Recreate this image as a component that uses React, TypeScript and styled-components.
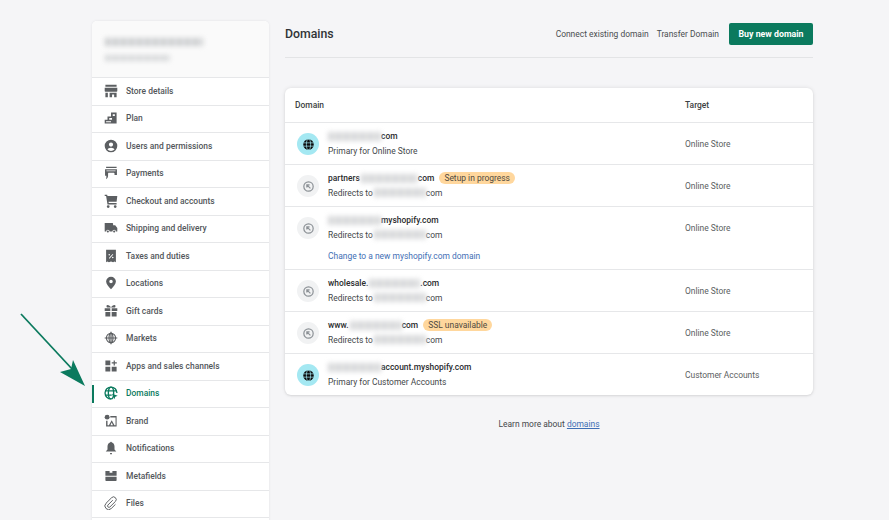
import { FC, ReactNode } from 'react'
import styled, { createGlobalStyle } from 'styled-components'

const FONT = '"Roboto", "Noto Sans", sans-serif'
const TEXT_SIZE = '8.45px'

const GlobalStyle = createGlobalStyle`
  html, body {
    margin: 0;
    height: 100%;
    overflow: hidden;
    background: #f5f5f7;
    font-family: ${FONT};
  }
`

const Page = styled.div`
  position: relative;
  display: flex;
  align-items: flex-start;
  gap: 16px;
  height: 520px;
  box-sizing: border-box;
  padding: 21px 76px 0 92px;
  overflow: hidden;
`

const Sidebar = styled.nav`
  flex: none;
  width: 177px;
  background: #fff;
  border-radius: 5px 5px 0 0;
  box-shadow: 0 0 3px rgba(23, 24, 24, 0.08);
`

const StoreHeader = styled.div`
  display: flex;
  flex-direction: column;
  gap: 9px;
  height: 56px;
  box-sizing: border-box;
  padding: 17px 13px 0;
  background: #fafafa;
  border-radius: 5px 5px 0 0;
`

const Blur = styled.span<{ $w: number; $h?: number; $shade?: string }>`
  display: inline-block;
  flex: none;
  width: ${({ $w }) => $w}px;
  height: ${({ $h }) => $h ?? 8}px;
  background: repeating-linear-gradient(
    90deg,
    ${({ $shade }) => $shade ?? '#d6d7d9'} 0 5px,
    #e3e4e5 5px 8px
  );
  filter: blur(2.5px);
  vertical-align: middle;
`

const NavRow = styled.div<{ $active?: boolean }>`
  position: relative;
  display: flex;
  align-items: center;
  gap: 8px;
  height: 27.5px;
  box-sizing: border-box;
  padding: 0 0 1px 12px;
  border-top: 1px solid #e6e7e9;
  font-size: ${TEXT_SIZE};
  font-weight: 500;
  color: ${({ $active }) => ($active ? '#0b7a5e' : '#53575b')};
  &::before {
    content: '';
    display: ${({ $active }) => ($active ? 'block' : 'none')};
    position: absolute;
    left: 0;
    top: 4px;
    bottom: 4px;
    width: 2px;
    background: #0b7a5e;
  }
`

const NavIcon = styled.svg`
  flex: none;
  width: 14px;
  height: 14px;
  fill: currentColor;
  color: #5c5f62;
`

const ActiveIcon = styled(NavIcon)`
  color: #0b7a5e;
`

const Main = styled.main`
  flex: 1;
  min-width: 0;
`

const TitleBar = styled.header`
  display: flex;
  align-items: center;
  height: 37px;
  box-sizing: border-box;
  padding-bottom: 10px;
  border-bottom: 1px solid #e3e4e6;
  margin-bottom: 30px;
`

const Title = styled.h1`
  flex: 1;
  margin: 0;
  font-size: 12.3px;
  font-weight: 500;
  color: #303336;
`

const PlainAction = styled.span`
  font-size: ${TEXT_SIZE};
  color: #4a4d50;
  margin-right: 8px;
`

const BuyButton = styled.button`
  width: 84px;
  height: 22px;
  margin-left: 2px;
  padding: 0;
  border: 0;
  border-radius: 2px;
  background: #0b7a5e;
  color: #fff;
  font: 700 8.8px ${FONT};
`

const Card = styled.section`
  background: #fff;
  border-radius: 6px;
  box-shadow: 0 0 4px rgba(23, 24, 24, 0.1), 0 1px 2px rgba(23, 24, 24, 0.08);
`

const HeadRow = styled.div`
  display: grid;
  grid-template-columns: 1fr 128px;
  align-items: center;
  height: 34px;
  padding-left: 10px;
  font-size: ${TEXT_SIZE};
  font-weight: 500;
  color: #3c3f42;
`

const DomainRow = styled.div<{ $tall?: boolean }>`
  display: grid;
  grid-template-columns: 22px 1fr 128px;
  column-gap: 9px;
  align-items: start;
  height: ${({ $tall }) => ($tall ? 63 : 42)}px;
  box-sizing: border-box;
  padding: 10px 0 0 12px;
  border-top: 1px solid #e6e7e9;
`

const Badge = styled.span<{ $primary?: boolean }>`
  display: flex;
  align-items: center;
  justify-content: center;
  width: 22px;
  height: 22px;
  border-radius: 50%;
  background: ${({ $primary }) => ($primary ? '#a4e8f2' : '#f1f2f3')};
  color: ${({ $primary }) => ($primary ? '#0a0a0a' : '#8c9196')};
`

const Lines = styled.div`
  display: flex;
  flex-direction: column;
  gap: 2px;
  margin-top: -3px;
`

const Line = styled.div`
  display: flex;
  align-items: center;
  height: 12.5px;
  font-size: ${TEXT_SIZE};
  white-space: nowrap;
  color: #44474a;
`

const NameLine = styled(Line)`
  color: #2a2c2e;
  font-weight: 500;
`

const Status = styled.span`
  margin-left: 5px;
  padding: 0 5px;
  height: 12px;
  line-height: 12px;
  border-radius: 6px;
  background: #ffd79d;
  font-size: ${TEXT_SIZE};
  font-weight: 400;
  color: #4f4a3f;
`

const BlueLink = styled.a`
  margin-top: 6.500px;
  font-size: ${TEXT_SIZE};
  line-height: 12.5px;
  color: #3f6fb5;
`

const TargetCell = styled.div`
  padding-top: 6px;
  font-size: ${TEXT_SIZE};
  color: #5b5e61;
`

const Footer = styled.p`
  margin: 24px 0 0;
  text-align: center;
  font-size: ${TEXT_SIZE};
  color: #44474a;
  a {
    color: #3f6fb5;
    text-decoration: underline;
  }
`

const ArrowOverlay = styled.svg`
  position: absolute;
  left: 0;
  top: 300px;
  width: 100px;
  height: 100px;
`

const I: FC<{ children: ReactNode; active?: boolean }> = ({ children, active }) => {
  const Comp = active ? ActiveIcon : NavIcon
  return <Comp viewBox="0 0 20 20">{children}</Comp>
}

const icons: Record<string, ReactNode> = {
  store: (
    <path d="M2 1h16v3H2zM1 5.500h18V10a1 1 0 0 1-1 1H2a1 1 0 0 1-1-1zM2 12.500h3.500V19H2zM8 12.500h10V19h-3.500v-4h-3v4H8z" />
  ),
  plan: (
    <path fillRule="evenodd" d="M10 2h8v16H1v-5.500h4V8h5zM12.500 4.500v2.500h3V4.500zM3 14.500V16h7v-1.500zM7.500 10v2.500h4V10z" />
  ),
  users: (
    <path fillRule="evenodd" d="M10 1a9 9 0 1 1 0 18 9 9 0 0 1 0-18zm0 4a3 3 0 1 0 0 6 3 3 0 0 0 0-6zm0 7.500c-2.500 0-4.300 1-5 2.500 1.200 1.300 3 2 5 2s3.800-.7 5-2c-.7-1.500-2.500-2.500-5-2.500z" />
  ),
  payments: (
    <path fillRule="evenodd" d="M3 1h15v2H3zM1.500 4.500h17V13H15v-2.500c0-.8-.5-1-1-1H7c-1 0-1.200.8-1.200 1.500v3c0 1.500-.8 4-3 5 .5-1.500.6-3 .6-5H1.500zM3.500 6.500v1h13v-1z" />
  ),
  cart: (
    <path d="M1 1h3.500l.5 2h14l-1 8H6.500l.3 2H18v2H5L3 3H1zM6 16a2 2 0 1 1 0 4 2 2 0 0 1 0-4zm10 0a2 2 0 1 1 0 4 2 2 0 0 1 0-4z" />
  ),
  truck: (
    <path d="M1 3h11a1 1 0 0 1 1 1v2h3l3 4v5h-2a2.500 2.500 0 0 0-5 0H8a2.500 2.500 0 0 0-5 0H1zM5.500 13.500a1.500 1.500 0 1 1 0 3 1.500 1.500 0 0 1 0-3zM14.500 13.500a1.500 1.500 0 1 1 0 3 1.500 1.500 0 0 1 0-3z" />
  ),
  taxes: (
    <path fillRule="evenodd" d="M3 1h14v18l-2-1.300L13 19l-3-1.300L7 19l-2-1.300L3 19zM12.500 7L7 13l.8.800 5.500-6zM7.500 7a1 1 0 1 0 0 2.200 1 1 0 0 0 0-2.200zm5 4a1 1 0 1 0 0 2.200 1 1 0 0 0 0-2.200z" />
  ),
  pin: (
    <path fillRule="evenodd" d="M10 1a7 7 0 0 1 7 7c0 4-4 8-7 11-3-3-7-7-7-11a7 7 0 0 1 7-7zm0 4.500a2.500 2.500 0 1 0 0 5 2.500 2.500 0 0 0 0-5z" />
  ),
  gift: (
    <path d="M1 6h8v4H1zM11 6h8v4h-8zM2 11.500h7V18H2zM11 11.500h7V18h-7zM5 1.500c2 0 4 1.500 5 3.500 1-2 3-3.500 5-3.500 1.500 0 2 1.800.8 3.500H4.200C3 3.300 3.500 1.500 5 1.500z" />
  ),
  markets: (
    <g fill="none" stroke="currentColor" strokeWidth="1.700">
      <circle cx="10" cy="10" r="6.500" />
      <ellipse cx="10" cy="10" rx="2.800" ry="6.500" />
      <path d="M1 10h18M10 1v18" />
    </g>
  ),
  apps: (
    <path d="M2 2h7v7H2zM2 11h7v7H2zM11 11h7v7h-7zM13.800 2h1.700v2.800h2.800v1.700h-2.800v2.800h-1.700V6.500H11V4.800h2.800z" />
  ),
  domains: (
    <>
      <g fill="none" stroke="currentColor" strokeWidth="1.900">
        <path d="M18.500 10A8.500 8.500 0 1 0 10 18.500" />
        <ellipse cx="10" cy="10" rx="3.800" ry="8.500" />
        <path d="M2 7h16M2 13h9" />
      </g>
      <path d="M11.500 11l8 3-3.400 1.300L14.800 19z" />
    </>
  ),
  brand: (
    <>
      <circle cx="4.500" cy="4.500" r="3.500" />
      <path fillRule="evenodd" d="M9 3h9v15H3V9.500h2V16h2l4-7 4 7h1.500V5H9zM11 12l-1.800 4h3.600z" />
    </>
  ),
  bell: (
    <path d="M10 1c.8 0 1.200.6 1.200 1.300C13.800 3 15 5.500 15 8v4l2.500 3h-15L5 12V8c0-2.500 1.200-5 3.800-5.700C8.800 1.600 9.200 1 10 1zM8.700 17h2.600v2H8.700z" />
  ),
  meta: (
    <path d="M2 3h6v2.500h4V3h6v6.500H2zM2 11h16v5a1 1 0 0 1-1 1H3a1 1 0 0 1-1-1z" />
  ),
  clip: (
    <path
      fill="none"
      stroke="currentColor"
      strokeWidth="1.400"
      d="M12.500 6L5.500 13a2 2 0 0 0 2.800 2.800l8-8a3.800 3.800 0 0 0-5.400-5.400l-8 8a5.300 5.300 0 0 0 7.500 7.500l6-6"
    />
  ),
}

const navItems: { label: string; icon: string; active?: boolean }[] = [
  { label: 'Store details', icon: 'store' },
  { label: 'Plan', icon: 'plan' },
  { label: 'Users and permissions', icon: 'users' },
  { label: 'Payments', icon: 'payments' },
  { label: 'Checkout and accounts', icon: 'cart' },
  { label: 'Shipping and delivery', icon: 'truck' },
  { label: 'Taxes and duties', icon: 'taxes' },
  { label: 'Locations', icon: 'pin' },
  { label: 'Gift cards', icon: 'gift' },
  { label: 'Markets', icon: 'markets' },
  { label: 'Apps and sales channels', icon: 'apps' },
  { label: 'Domains', icon: 'domains', active: true },
  { label: 'Brand', icon: 'brand' },
  { label: 'Notifications', icon: 'bell' },
  { label: 'Metafields', icon: 'meta' },
  { label: 'Files', icon: 'clip' },
  { label: '', icon: '' },
]

const GlobeGlyph = () => (
  <svg viewBox="0 0 20 20" width="11" height="11">
    <circle cx="10" cy="10" r="9.500" fill="currentColor" />
    <g fill="none" stroke="#a4e8f2" strokeWidth="1.300">
      <ellipse cx="10" cy="10" rx="3.800" ry="9.500" />
      <path d="M1 7h18M1 13h18" />
    </g>
  </svg>
)

const RedirectGlyph = () => (
  <svg viewBox="0 0 20 20" width="11" height="11" fill="none" stroke="currentColor" strokeWidth="2.200">
    <circle cx="10" cy="10" r="8.500" />
    <path d="M7 7l6.500 6.500M7 12V7h5" />
  </svg>
)

const Blank = styled(Blur)`
  margin: 0 0 0 1px;
`

const RedirectLine: FC<{ w?: number }> = ({ w = 52 }) => (
  <Line>
    Redirects to <Blank $w={w} $h={9} />com
  </Line>
)

const DomainItem: FC<{
  primary?: boolean
  name: ReactNode
  sub: ReactNode
  link?: string
  target: string
}> = ({ primary, name, sub, link, target }) => (
  <DomainRow $tall={!!link}>
    <Badge $primary={primary}>{primary ? <GlobeGlyph /> : <RedirectGlyph />}</Badge>
    <Lines>
      <NameLine>{name}</NameLine>
      {sub}
      {link && <BlueLink>{link}</BlueLink>}
    </Lines>
    <TargetCell>{target}</TargetCell>
  </DomainRow>
)

export default function App() {
  return (
    <>
      <GlobalStyle />
      <Page>
        <Sidebar>
          <StoreHeader>
            <Blur $w={98} $h={8} $shade="#c8cacc" />
            <Blur $w={65} $h={6} $shade="#d3d5d7" />
          </StoreHeader>
          {navItems.map((item) => (
            <NavRow key={item.label} $active={item.active}>
              {item.icon && <I active={item.active}>{icons[item.icon]}</I>}
              {item.label}
            </NavRow>
          ))}
        </Sidebar>
        <Main>
          <TitleBar>
            <Title>Domains</Title>
            <PlainAction>Connect existing domain</PlainAction>
            <PlainAction>Transfer Domain</PlainAction>
            <BuyButton>Buy new domain</BuyButton>
          </TitleBar>
          <Card>
            <HeadRow>
              <span>Domain</span>
              <span>Target</span>
            </HeadRow>
            <DomainItem
              primary
              name={<><Blur $w={53} $h={9} />com</>}
              sub={<Line>Primary for Online Store</Line>}
              target="Online Store"
            />
            <DomainItem
              name={<>partners<Blank $w={57} $h={9} />com<Status>Setup in progress</Status></>}
              sub={<RedirectLine />}
              target="Online Store"
            />
            <DomainItem
              name={<><Blur $w={53} $h={9} />myshopify.com</>}
              sub={<RedirectLine />}
              link="Change to a new myshopify.com domain"
              target="Online Store"
            />
            <DomainItem
              name={<>wholesale.<Blank $w={51} $h={9} />.com</>}
              sub={<RedirectLine />}
              target="Online Store"
            />
            <DomainItem
              name={<>www.<Blank $w={52} $h={9} />com<Status>SSL unavailable</Status></>}
              sub={<RedirectLine />}
              target="Online Store"
            />
            <DomainItem
              primary
              name={<><Blur $w={53} $h={9} />account.myshopify.com</>}
              sub={<Line>Primary for Customer Accounts</Line>}
              target="Customer Accounts"
            />
          </Card>
          <Footer>
            Learn more about <a>domains</a>
          </Footer>
        </Main>
        <ArrowOverlay viewBox="0 0 100 100">
          <path d="M21 14L73 70" stroke="#0b7a5e" strokeWidth="1.800" fill="none" />
          <path d="M85 86L60 72L71 69L73 60z" fill="#0b7a5e" />
        </ArrowOverlay>
      </Page>
    </>
  )
}
